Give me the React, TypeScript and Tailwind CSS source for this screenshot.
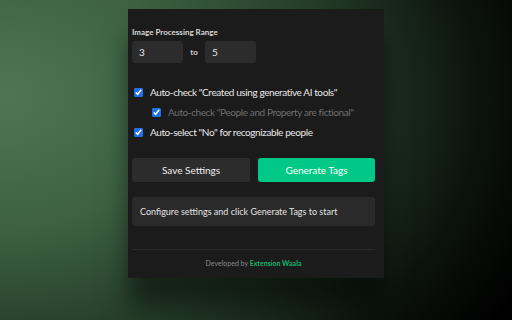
import { useState } from "react";

const font = { fontFamily: 'Lato, "Open Sans", "Noto Sans", sans-serif' };

export default function App() {
  const [minVal, setMinVal] = useState("3");
  const [maxVal, setMaxVal] = useState("5");
  const [aiTools, setAiTools] = useState(true);
  const [fictional, setFictional] = useState(true);
  const [noPeople, setNoPeople] = useState(true);

  return (
    <div
      className="w-[512px] h-[320px] overflow-hidden flex justify-center bg-[radial-gradient(ellipse_120%_140%_at_0%_30%,#4e7654_0%,#3d6142_30%,#253d29_55%,#0c130d_78%,#000_95%)]"
      style={font}
    >
      <div className="mt-[9px] w-[256px] h-[269px] bg-[#1b1b1b] shadow-[0_28px_24px_rgba(0,0,0,0.5)] pl-[4px] pr-[9px] pt-[17px] flex flex-col">
        <p className="text-[8px] font-bold text-[#d8d8d8] leading-[12px]">Image Processing Range</p>
        <div className="flex items-center mt-[3px]">
          <input
            value={minVal}
            onChange={(e) => setMinVal(e.target.value)}
            className="w-[51px] h-[22px] rounded-[3px] bg-[#2c2c2c] text-[#e6e6e6] text-[10px] pl-[7px] outline-none"
          />
          <span className="w-[22px] text-center text-[8px] text-[#cfcfcf] font-bold">to</span>
          <input
            value={maxVal}
            onChange={(e) => setMaxVal(e.target.value)}
            className="w-[51px] h-[22px] rounded-[3px] bg-[#2c2c2c] text-[#e6e6e6] text-[10px] pl-[7px] outline-none"
          />
        </div>

        <div className="mt-[23px] flex flex-col gap-[8px] text-[10px] leading-[12px] whitespace-nowrap tracking-[-0.4px]">
          <label className="flex items-center gap-[7px] pl-[2px]">
            <input type="checkbox" checked={aiTools} onChange={() => setAiTools(!aiTools)} className="w-[9px] h-[9px] m-0 accent-[#1e6fe8]" />
            <span className="text-[#e8e8e8]">Auto-check "Created using generative AI tools"</span>
          </label>
          <label className="flex items-center gap-[7px] pl-[20px]">
            <input type="checkbox" checked={fictional} onChange={() => setFictional(!fictional)} className="w-[9px] h-[9px] m-0 accent-[#1e6fe8]" />
            <span className="text-[#6e6e6e]">Auto-check "People and Property are fictional"</span>
          </label>
          <label className="flex items-center gap-[7px] pl-[2px]">
            <input type="checkbox" checked={noPeople} onChange={() => setNoPeople(!noPeople)} className="w-[9px] h-[9px] m-0 accent-[#1e6fe8]" />
            <span className="text-[#e8e8e8]">Auto-select "No" for recognizable people</span>
          </label>
        </div>

        <div className="mt-[20px] flex gap-[8px]">
          <button className="w-[118px] h-[24px] rounded-[3px] bg-[#2c2c2c] text-[#ececec] text-[10px]">Save Settings</button>
          <button className="w-[117px] h-[24px] rounded-[3px] bg-[#00c886] text-white text-[10px]">Generate Tags</button>
        </div>

        <div className="mt-[15px] h-[29px] rounded-[3px] bg-[#2a2a2a] flex items-center pl-[8px] text-[9px] text-[#e2e2e2]">
          Configure settings and click Generate Tags to start
        </div>

        <div className="mt-[23px] border-t border-[#2a2a2a]" />
        <p className="mt-[8px] text-center text-[7px] text-[#8a8a8a]">
          Developed by <span className="text-[#18b56e] font-bold">Extension Waala</span>
        </p>
      </div>
    </div>
  );
}
